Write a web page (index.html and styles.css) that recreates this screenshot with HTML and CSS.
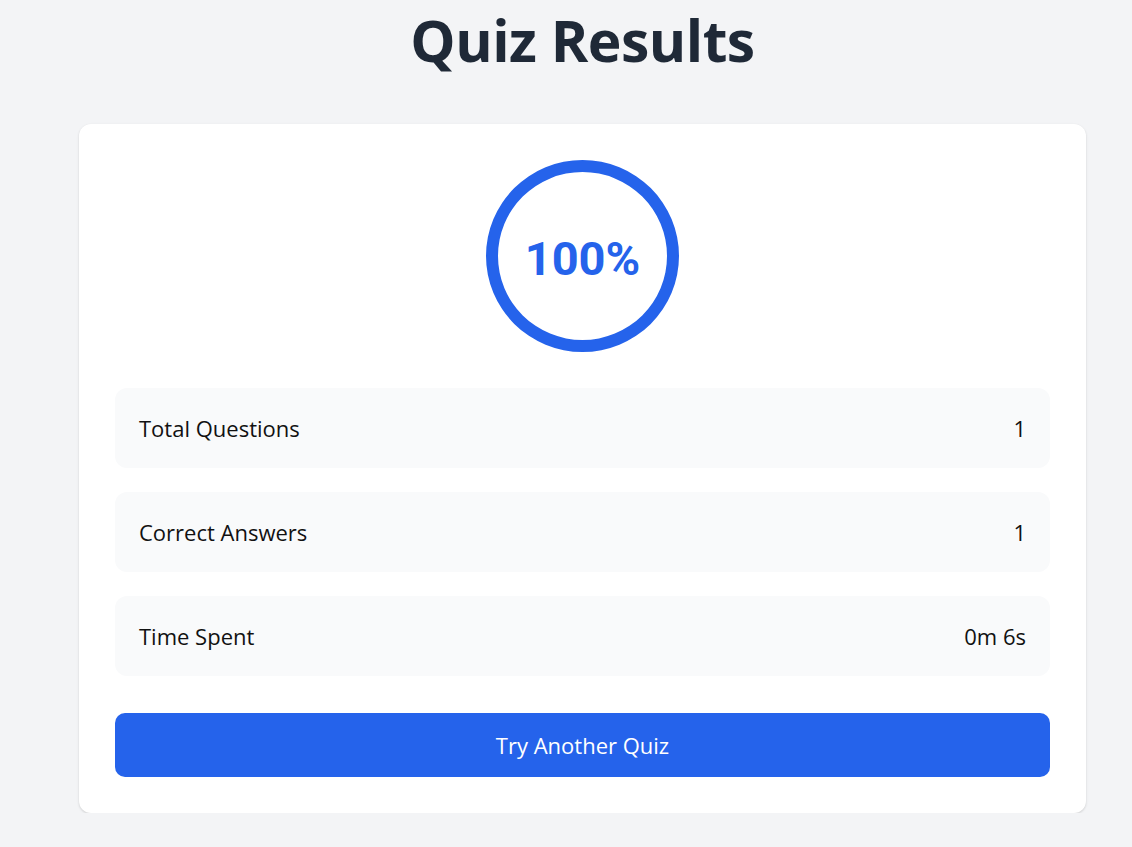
FILE: index.html
```html
<!DOCTYPE html>
<html lang="en">
<head>
<meta charset="utf-8">
<title>Quiz Results</title>
<link rel="stylesheet" href="styles.css">
</head>
<body>
<main class="page">
  <h1 class="title">Quiz Results</h1>
  <section class="card">
    <div class="score-wrap">
      <div class="score-ring">
        <span class="score-text">100%</span>
      </div>
    </div>
    <div class="stats">
      <div class="stat-row"><span>Total Questions</span><span>1</span></div>
      <div class="stat-row"><span>Correct Answers</span><span>1</span></div>
      <div class="stat-row"><span>Time Spent</span><span>0m 6s</span></div>
    </div>
    <button class="btn">Try Another Quiz</button>
  </section>
</main>
</body>
</html>
```
FILE: styles.css
```css
* { box-sizing: border-box; }
html, body { margin: 0; padding: 0; }
body {
  background: #f3f4f6;
  font-family: "Open Sans", "Noto Sans", sans-serif;
  color: #111;
}
.page {
  width: 1007px;
  margin-left: 79px;
}
.title {
  margin: 0;
  padding-top: 0;
  height: 124px;
  text-align: center;
  font-size: 57px;
  font-weight: 700;
  color: #1f2937;
  line-height: 80px;
  letter-spacing: -0.5px;
}
.card {
  background: #fff;
  border-radius: 12px;
  box-shadow: 0 1px 3px rgba(0,0,0,0.1), 0 1px 2px rgba(0,0,0,0.06);
  padding: 36px;
  display: flex;
  flex-direction: column;
}
.score-wrap {
  display: flex;
  justify-content: center;
}
.score-ring {
  width: 193px;
  height: 192px;
  border: 12px solid #2563eb;
  border-radius: 50%;
  display: flex;
  align-items: center;
  justify-content: center;
  padding-top: 5px;
}
.score-text {
  font-family: Roboto, "Open Sans", sans-serif;
  font-weight: 700;
  font-size: 47px;
  color: #2563eb;
}
.stats {
  margin-top: 36px;
  display: flex;
  flex-direction: column;
  gap: 24px;
}
.stat-row {
  height: 80px;
  background: #f9fafb;
  border-radius: 12px;
  padding: 0 24px;
  display: flex;
  align-items: center;
  justify-content: space-between;
  font-size: 22px;
  color: #111;
}
.btn {
  margin-top: 37px;
  height: 64px;
  border: none;
  border-radius: 10px;
  background: #2563eb;
  color: #fff;
  font-family: "Open Sans", "Noto Sans", sans-serif;
  font-size: 22px;
  cursor: pointer;
}
```
